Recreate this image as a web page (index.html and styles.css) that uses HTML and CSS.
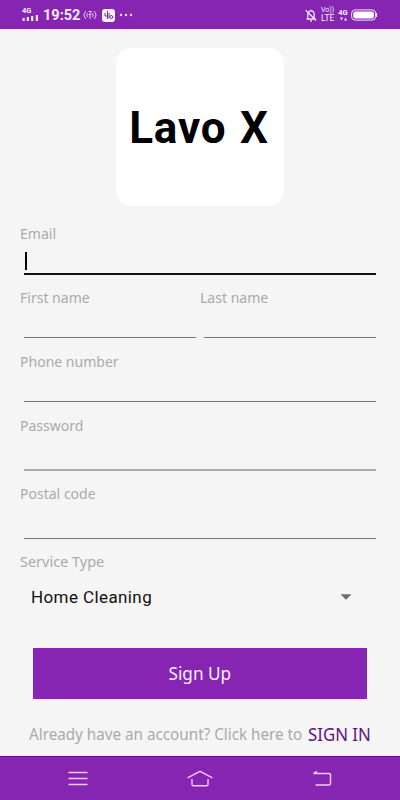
FILE: index.html
```html
<!DOCTYPE html>
<html lang="en">
<head>
  <meta charset="UTF-8">
  <meta name="viewport" content="width=device-width, initial-scale=1.0">
  <title>Lavo X | Sign Up</title>
  <link rel="stylesheet" href="styles.css">
</head>
<body>
  <header class="status-bar">
    <div class="network">
      <span class="network-type">4G</span>
      <svg width="17" height="6" viewBox="0 0 17 6" fill="#f6e6fb"><path d="M.5 3h2.2v3H.5zM4.800 2H7v4H4.800zM9.100 1h2.200v5H9.100zM13.800 0H16v6h-2.200z"/></svg>
    </div>
    <span class="clock">19:52</span>
    <svg class="cast" width="14" height="12" viewBox="0 0 14 12" fill="none" stroke="#e5c6ef" stroke-width="1"><path d="M3 2Q-1 6 3 10M4.5 4Q3 6 4.5 8M11 2q4 4 0 8M9.5 4Q11 6 9.5 8M5.5 2.5h3L6 5.5h2.5M7 6v4"/></svg>
    <svg class="app-icon" width="13" height="13" viewBox="0 0 13 13"><rect width="13" height="13" rx="3" fill="#fff5ff"/><path d="M3 4v3h2M5.5 2v8M7 4v5" fill="none" stroke="#8525b2"/><circle cx="9.2" cy="8" r="1.5" fill="none" stroke="#8525b2"/></svg>
    <svg width="14" height="4" viewBox="0 0 14 4" fill="#f6e6fb"><circle cx="2" cy="2" r="1.2"/><circle cx="7" cy="2" r="1.2"/><circle cx="12" cy="2" r="1.2"/></svg>
    <svg class="bell" width="12" height="13" viewBox="0 0 12 13" fill="none" stroke="#f6e6fb" stroke-width="1.3"><path d="M1.5 10h9M2.8 10V5.5a3.2 3.6 0 0 1 6.4 0V10M6 .8v1.4M5 11.8h2M.7 1.2l10.5 10.3"/></svg>
    <div class="volte"><span>Vo))</span><span class="lte">LTE</span></div>
    <div class="data"><span>4G</span><svg width="7" height="4" viewBox="0 0 7 4" fill="#f6e6fb"><path d="M0 .5h3L1.5 3.5zM4 3.5h3L5.5 .5z"/></svg></div>
    <svg class="battery" width="27" height="12" viewBox="0 0 27 12"><rect x=".6" y=".9" width="24" height="10.2" rx="3.5" fill="none" stroke="#f6e6fb"/><rect x="2.3" y="2.5" width="20.6" height="7" rx="2" fill="#fff"/><path d="M25.4 4v4" stroke="#f6e6fb" stroke-width="1.5"/></svg>
  </header>

  <main class="page">
    <div class="logo"><span>Lavo X</span></div>

    <form class="signup-form">
      <div class="field focused">
        <label for="email">Email</label>
        <input type="text" id="email">
      </div>
      <div class="name-row">
        <div class="field">
          <label for="firstName">First name</label>
          <input type="text" id="firstName">
        </div>
        <div class="field">
          <label for="lastName">Last name</label>
          <input type="text" id="lastName">
        </div>
      </div>
      <div class="field">
        <label for="phone">Phone number</label>
        <input type="tel" id="phone">
      </div>
      <div class="field tall password">
        <label for="password">Password</label>
        <input type="password" id="password">
      </div>
      <div class="field tall">
        <label for="postal">Postal code</label>
        <input type="text" id="postal">
      </div>
      <div class="service">
        <span class="service-label">Service Type</span>
        <div class="service-select">
          <span>Home Cleaning</span>
          <svg width="12" height="6" viewBox="0 0 12 6"><path d="M.5 .2h11L6 5.7z" fill="#6c6c6c"/></svg>
        </div>
      </div>
      <button type="button" class="signup-btn"><span>Sign Up</span></button>
    </form>

    <p class="signin"><span class="signin-text">Already have an account? Click here to</span> <a class="signin-link">SIGN IN</a></p>
  </main>

  <nav class="nav-bar">
    <svg width="20" height="16" viewBox="0 0 20 16" fill="none" stroke="#f3c8fb" stroke-width="1.5"><path d="M.5 1.500h19M.5 7.500h19M.5 13.500h19"/></svg>
    <svg width="28" height="18" viewBox="0 0 28 18" fill="none" stroke="#f3c8fb" stroke-width="1.4"><path d="M1.5 7.800L14 1.300l12.500 6.500M6 9v5.500q0 1.300 1.300 1.300h13.400Q22 15.800 22 14.500V9"/></svg>
    <svg width="20" height="16" viewBox="0 0 20 16" fill="none" stroke="#f3c8fb" stroke-width="1.5"><path d="M1.500 2.500h15.500q1.500 0 1.500 1.500v8.500q0 1.500-1.500 1.500H3.500M5 .5L1.500 2.500"/></svg>
  </nav>
</body>
</html>
```
FILE: styles.css
```css
* { box-sizing: border-box; }
body { margin: 0; width: 400px; height: 800px; display: flex; flex-direction: column; background: #f5f5f5; font-family: 'Noto Sans', 'Open Sans', sans-serif; overflow: hidden; }
svg { display: block; flex: none; }

.status-bar { height: 29px; flex: none; display: flex; align-items: center; padding: 1px 22px 0; background: #8525b2; color: #f9ebfc; font-family: Roboto, sans-serif; }
.network { width: 17px; margin-right: 4px; padding-bottom: 2px; }
.network-type { display: block; font-size: 7.5px; line-height: 8px; font-weight: 700; }
.clock { width: 37px; font-size: 14.5px; font-weight: 700; line-height: 18px; padding-top: 1px; }
.cast { margin: 0 5px 0 3px; }
.app-icon { margin-right: 4px; }
.bell { margin-left: auto; }
.volte { width: 15px; margin-left: 4px; font-size: 7px; line-height: 7px; }
.volte span { display: block; }
.volte .lte { font-size: 8.5px; line-height: 9px; }
.data { width: 10px; margin: 0 3px 0 2px; font-size: 7.5px; line-height: 8px; font-weight: 700; display: flex; flex-direction: column; align-items: center; }

.page { flex: 1; padding: 19px 20px 0; }
.logo { width: 168px; height: 158px; margin: 0 auto; border-radius: 16px; background: #fff; color: #000; display: flex; align-items: center; justify-content: center; font: 700 44px/52px Roboto, sans-serif; letter-spacing: 0.8px; word-spacing: 2px; }
.logo span { margin: 2px 2px 0 0; }
.signup-form { margin-top: 17px; }
.field { height: 64px; display: flex; flex-direction: column; }
.field label, .service-label { font-size: 15px; line-height: 20px; color: #aaa; transform: scaleX(0.935); transform-origin: left; }
.field input { height: 30px; margin: 1px 4px 0; padding: 0; min-width: 0; border: none; border-bottom: 1px solid #777; background: none; outline: none; }
.focused { position: relative; }
.focused input { height: 31px; border-bottom: 2px solid #111; }
.focused::after { content: ''; position: absolute; left: 5px; top: 29px; width: 1.5px; height: 18px; background: #000; }
.name-row { display: flex; }
.name-row .field { flex: 1; min-width: 0; }
.tall { height: 68px; }
.tall input { height: 35px; }
.password input { border-bottom: 2px solid #aaa; }
.service { height: 97px; }
.service-label { display: block; transform: scaleX(0.965); }
.service-select { display: flex; align-items: center; justify-content: space-between; height: 52px; padding: 0 28px 0 11px; color: #111; font-family: Roboto, sans-serif; font-size: 17px; letter-spacing: 0.4px; }
.signup-btn { display: block; width: 334px; height: 51px; margin: 0 auto; padding: 0 0 2px; border: none; background: #8525b2; color: #fff0ff; font-family: inherit; font-size: 18px; }
.signup-btn span { display: inline-block; transform: scaleX(0.955); }
.signin { position: relative; display: flex; align-items: center; justify-content: space-between; height: 30px; margin: 20px 9px 0; white-space: nowrap; }
.signin-text { width: 274px; font-size: 15.5px; color: #aaa; transform: scaleX(0.982); transform-origin: left; }
.signin-link { width: 63px; font-size: 18px; color: #5d1281; transform: scaleX(0.935); transform-origin: left; }

.nav-bar { height: 44px; flex: none; display: flex; align-items: center; justify-content: space-between; padding: 0 68px; background: #8525b2; border-top: 1px solid #690b92; }
```
